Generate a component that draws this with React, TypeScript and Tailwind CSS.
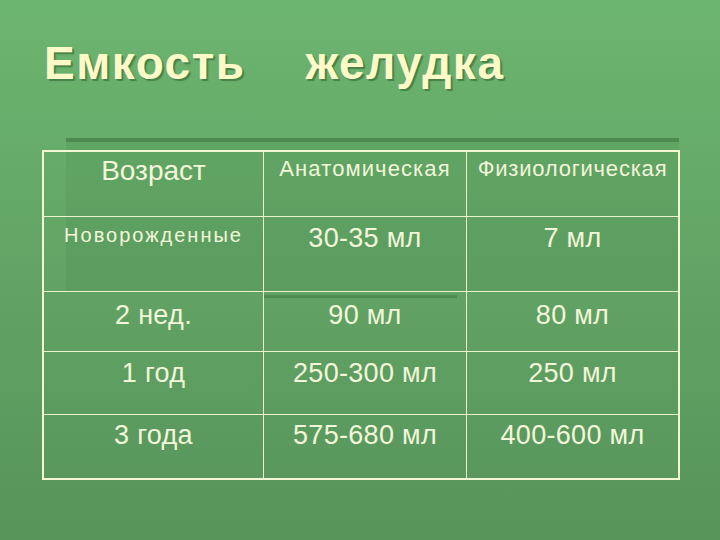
import React from "react";

type Cell = { text: string; cls: string };

const V = "text-[27px] leading-[30px] tracking-[0.3px]";

const rows: { h: string; pt: string; cells: Cell[] }[] = [
  {
    h: "h-[64px]",
    pt: "",
    cells: [
      { text: "Возраст", cls: "text-[28px] leading-[32px] pt-[3px]" },
      { text: "Анатомическая", cls: "text-[22px] leading-[26px] pt-[4px] tracking-[1.1px]" },
      { text: "Физиологическая", cls: "text-[22px] leading-[26px] pt-[4px] tracking-[0.8px]" },
    ],
  },
  {
    h: "h-[75px]",
    pt: "",
    cells: [
      { text: "Новорожденные", cls: "text-[20px] leading-[23px] pt-[7px] tracking-[2px]" },
      { text: "30-35 мл", cls: `${V} pt-[6px]` },
      { text: "7 мл", cls: `${V} pt-[6px]` },
    ],
  },
  {
    h: "h-[60px]",
    pt: "",
    cells: [
      { text: "2 нед.", cls: `${V} pt-[8px]` },
      { text: "90 мл", cls: `${V} pt-[8px]` },
      { text: "80 мл", cls: `${V} pt-[8px]` },
    ],
  },
  {
    h: "h-[63px]",
    pt: "",
    cells: [
      { text: "1 год", cls: `${V} pt-[6px]` },
      { text: "250-300 мл", cls: `${V} pt-[6px]` },
      { text: "250 мл", cls: `${V} pt-[6px]` },
    ],
  },
  {
    h: "h-[64px]",
    pt: "",
    cells: [
      { text: "3 года", cls: `${V} pt-[5px]` },
      { text: "575-680 мл", cls: `${V} pt-[5px]` },
      { text: "400-600 мл", cls: `${V} pt-[5px]` },
    ],
  },
];

const colW = ["w-[219px]", "w-[203px]", "w-[212px]"];

export default function App() {
  return (
    <div className="relative w-[720px] h-[540px] overflow-hidden bg-gradient-to-b from-[#6cb570] via-[#62a465] to-[#57945a] font-['Liberation_Sans',Arial,sans-serif]">
      {/* decorative slide background shapes */}
      <div className="absolute left-[66px] top-[138px] w-[613px] h-[154px] bg-[rgba(0,30,0,0.05)] border-t-4 border-[#4c8b4f]" />
      <div className="absolute left-[264px] top-[295px] w-[193px] h-[3px] bg-[#4e8c51]" />

      <div className="relative pt-[37px] pl-[44px] flex gap-[60px] text-[46px] leading-[53px] font-bold text-[#fdf9c8] tracking-[1.5px] [text-shadow:2px_2px_1px_rgba(30,70,30,0.45)]">
        <span>Емкость</span>
        <span>желудка</span>
      </div>

      <div className="relative ml-[42px] mt-[60px] w-[638px] border-2 border-[#f3f7d3] flex flex-col text-[#f2f6da]">
        {rows.map((r, ri) => (
          <div key={ri} className={`flex ${r.h} ${ri > 0 ? "border-t border-[#eef3cf]" : ""}`}>
            {r.cells.map((c, ci) => (
              <div
                key={ci}
                className={`${colW[ci]} ${ci > 0 ? "border-l border-[#eef3cf]" : ""} text-center ${c.cls}`}
              >
                {c.text}
              </div>
            ))}
          </div>
        ))}
      </div>
    </div>
  );
}
